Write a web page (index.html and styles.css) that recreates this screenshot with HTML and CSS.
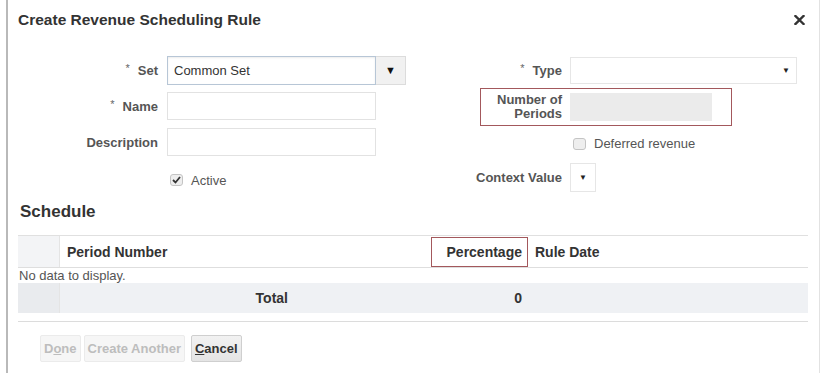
FILE: index.html
```html
<!DOCTYPE html>
<html lang="en">
<head>
    <meta charset="UTF-8">
    <meta name="viewport" content="width=device-width, initial-scale=1.0">
    <title>Create Revenue Scheduling Rule</title>
    <link rel="stylesheet" href="styles.css">
</head>
<body>

<div class="dialog">
    <!-- Dialog title bar -->
    <div class="dlg-header">
        <h1 class="dlg-title">Create Revenue Scheduling Rule</h1>
        <button class="close-btn" title="Close">
            <svg width="11" height="10" viewBox="0 0 11 10"><path d="M1.5 1 L9.5 9 M9.5 1 L1.5 9" stroke="#333" stroke-width="2.4" stroke-linecap="square"/></svg>
        </button>
    </div>

    <!-- Rule fields -->
    <div class="form">
        <div class="col-left">
            <div class="row">
                <label class="lbl"><span class="req">*</span>Set</label>
                <div class="combo">
                    <input class="field field-set" type="text" value="Common Set">
                    <span class="combo-btn">&#9660;</span>
                </div>
            </div>
            <div class="row">
                <label class="lbl"><span class="req">*</span>Name</label>
                <input class="field field-wide" type="text">
            </div>
            <div class="row">
                <label class="lbl">Description</label>
                <input class="field field-wide" type="text">
            </div>
            <div class="row row-check">
                <span class="lbl"></span>
                <span class="check checked"><svg width="9" height="8" viewBox="0 0 9 8"><path d="M1 4 L3.5 6.5 L8 1" stroke="#333" stroke-width="1.8" fill="none"/></svg></span>
                <span class="check-text">Active</span>
            </div>
        </div>

        <div class="col-right">
            <div class="row row-type">
                <label class="lbl"><span class="req">*</span>Type</label>
                <div class="select select-type"><span class="arrow">&#9660;</span></div>
            </div>
            <div class="periods-box">
                <label class="lbl lbl-two"><span>Number of</span><span>Periods</span></label>
                <div class="field-disabled"></div>
            </div>
            <div class="row row-deferred">
                <span class="lbl"></span>
                <span class="check"></span>
                <span class="check-text">Deferred revenue</span>
            </div>
            <div class="row row-context">
                <label class="lbl">Context Value</label>
                <div class="select select-small"><span class="arrow">&#9660;</span></div>
            </div>
        </div>
    </div>

    <h2 class="section-title">Schedule</h2>

    <!-- Schedule table -->
    <div class="schedule">
        <div class="trow thead">
            <div class="cell sel"></div>
            <div class="cell">Period Number</div>
            <div class="cell num"><span class="pct-box">Percentage</span></div>
            <div class="cell date">Rule Date</div>
        </div>
        <div class="empty">No data to display.</div>
        <div class="trow tfoot">
            <div class="cell sel"></div>
            <div class="cell total">Total</div>
            <div class="cell num">0</div>
            <div class="cell"></div>
        </div>
    </div>

    <div class="footer">
        <button class="btn" disabled>D<u>o</u>ne</button>
        <button class="btn" disabled>Create Another</button>
        <button class="btn btn-cancel"><u>C</u>ancel</button>
    </div>
</div>

</body>
</html>
```

FILE: styles.css
```css
body {
    font-family: "Liberation Sans", Arial, sans-serif;
    background-color: #fff;
    margin: 0;
    padding: 0;
    color: #333;
}
.dialog {
    margin-left: 6px;
    width: 790px;
    height: 373px;
    border-left: 2px solid #b9b9b9;
    border-right: 1px solid #e2e2e2;
    padding: 0 11px 0 10px;
    box-sizing: content-box;
}
.dlg-header {
    height: 40px;
    display: flex;
    align-items: center;
    justify-content: space-between;
}
.dlg-title {
    margin: 0;
    font-size: 15.5px;
    font-weight: bold;
    color: #333;
}
.close-btn {
    border: none;
    background: none;
    padding: 0;
    margin-right: 3px;
    display: flex;
}
.form {
    display: flex;
    margin-top: 16px;
}
.col-left {
    width: 388px;
    display: flex;
    flex-direction: column;
    gap: 8px;
}
.col-right {
    width: 355px;
    margin-left: 36px;
    display: flex;
    flex-direction: column;
}
.row {
    display: flex;
    align-items: center;
    height: 28px;
}
.lbl {
    flex: none;
    width: 140px;
    margin-right: 9px;
    text-align: right;
    font-size: 13px;
    font-weight: bold;
    color: #555;
}
.col-right .lbl {
    width: 120px;
    margin-right: 8px;
}
.req {
    font-size: 11px;
    font-weight: normal;
    color: #666;
    position: relative;
    top: -3px;
    margin-right: 8px;
}
.field {
    height: 28px;
    box-sizing: border-box;
    border: 1px solid #e2e2e2;
    background: #fff;
    padding: 0 6px;
    font-family: inherit;
    font-size: 13px;
    color: #333;
}
.field-wide {
    width: 209px;
}
.combo {
    display: flex;
    height: 29px;
}
.field-set {
    width: 209px;
    height: 29px;
    border-color: #b7c6d6;
    box-shadow: inset 0 1px 2px rgba(0, 0, 0, 0.08);
    padding-left: 6px;
}
.combo-btn {
    width: 30px;
    box-sizing: border-box;
    border: 1px solid #dcdcdc;
    border-left: none;
    background-color: #f1f1f1;
    font-size: 11px;
    color: #111;
    display: flex;
    align-items: center;
    justify-content: center;
}
.row-check {
    height: 32px;
}
.check {
    width: 13px;
    height: 12px;
    box-sizing: border-box;
    margin-left: 3px;
    margin-right: 8px;
    border: 1px solid #c4c4c4;
    border-radius: 3px;
    background-color: #eee;
    display: flex;
    align-items: center;
    justify-content: center;
}
.check-text {
    font-size: 13px;
    color: #555;
}
.row-type {
    height: 27px;
    margin-top: 1px;
}
.select {
    height: 100%;
    box-sizing: border-box;
    border: 1px solid #e6e6e6;
    background: #fff;
    display: flex;
    align-items: center;
    justify-content: flex-end;
}
.select-type {
    width: 227px;
    padding-right: 6px;
}
.select-small {
    width: 26px;
    justify-content: center;
}
.arrow {
    font-size: 8px;
    color: #222;
}
.periods-box {
    display: flex;
    align-items: center;
    margin: 4px 0 0 38px;
    width: 252px;
    height: 38px;
    box-sizing: border-box;
    border: 1px solid #a3585c;
}
.periods-box .lbl {
    width: 81px;
    margin-right: 8px;
    display: flex;
    flex-direction: column;
    align-items: flex-end;
    line-height: 14px;
}
.field-disabled {
    width: 142px;
    height: 28px;
    background-color: #ebebeb;
}
.row-deferred {
    height: 23px;
    margin-top: 6px;
}
.row-context {
    height: 29px;
    margin-top: 8px;
}
.section-title {
    margin: 6px 0 13px 2px;
    font-size: 17px;
    line-height: 20px;
    font-weight: bold;
    color: #333;
}
.schedule {
    font-size: 14px;
}
.trow {
    display: grid;
    grid-template-columns: 42px 371px 97px 1fr;
}
.thead {
    height: 33px;
    box-sizing: border-box;
    border-top: 1px solid #e0e0e0;
    border-bottom: 1px solid #dedede;
    font-weight: bold;
    color: #333;
}
.cell {
    display: flex;
    align-items: center;
    padding-left: 7px;
}
.sel {
    padding: 0;
    background-color: #f3f4f6;
    border-right: 1px solid #e4e4e4;
}
.num {
    justify-content: flex-end;
    padding: 0 6px 0 0;
}
.thead .num {
    align-items: flex-end;
    padding: 0;
}
.pct-box {
    width: 97px;
    height: 30px;
    box-sizing: border-box;
    border: 1px solid #a3585c;
    display: flex;
    align-items: center;
    justify-content: flex-end;
    padding-right: 5px;
}
.empty {
    height: 15px;
    line-height: 15px;
    font-size: 13px;
    color: #555;
    padding-left: 1px;
}
.tfoot {
    height: 30px;
    background-color: #eff1f4;
    font-weight: bold;
    color: #333;
}
.tfoot .sel {
    background-color: #e9ebee;
}
.total {
    justify-content: flex-end;
    padding: 0 143px 0 0;
}
.footer {
    margin-top: 8px;
    border-top: 1px solid #dcdcdc;
    padding: 13px 0 0 22px;
    display: flex;
    gap: 3px;
}
.btn {
    height: 27px;
    padding: 0 3px;
    font-family: inherit;
    font-size: 13px;
    font-weight: bold;
    color: #bdbdbd;
    background-color: #f6f6f6;
    border: 1px solid #ebebeb;
    border-radius: 2px;
}
.btn u {
    text-decoration: underline;
}
.btn-cancel {
    margin-left: 3px;
    color: #333;
    background: linear-gradient(#f2f2f2, #e4e4e4);
    border-color: #cfcfcf;
}
```
